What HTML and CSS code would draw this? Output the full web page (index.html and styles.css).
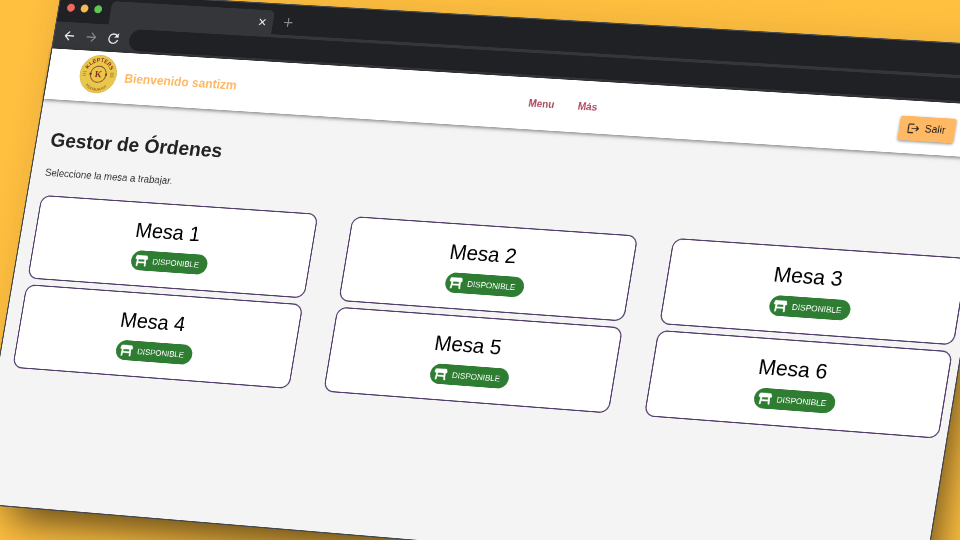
FILE: index.html
```html
<!DOCTYPE html>
<html lang="es">
<head>
    <meta charset="utf-8">
    <title>Gestor de Órdenes</title>
    <link rel="stylesheet" href="styles.css">
</head>
<body>
    <svg class="sprite" aria-hidden="true">
        <symbol id="icon-table" viewBox="0 0 24 24">
            <path fill="currentColor" stroke="currentColor" stroke-width=".8" d="m21.96 8.730-1-4c-.12-.43-.51-.73-.96-.73H4c-.45 0-.84.3-.96.73l-1 4c-.18.63.3 1.270.96 1.270h1.800L4 21h2l.5-5h11l.5 5h2l-.8-11H21c.66 0 1.140-.64.96-1.270zM6.700 14l.3-4h10l.3 4H6.700z"/>
        </symbol>
    </svg>

    <div class="stage">
        <div class="window">
            <!-- Browser bars -->
            <div class="tab-bar">
                <span class="dot red"></span>
                <span class="dot yellow"></span>
                <span class="dot green"></span>
                <div class="tab">
                    <button class="bar-button" aria-label="Cerrar">
                        <svg width="11" height="11" viewBox="0 0 12 12"><path d="M1 1l10 10M11 1L1 11" stroke="currentColor" stroke-width="2"/></svg>
                    </button>
                </div>
                <button class="bar-button muted" aria-label="Nueva">
                    <svg width="14" height="14" viewBox="0 0 14 14"><path d="M7 0v14M0 7h14" stroke="currentColor" stroke-width="2"/></svg>
                </button>
            </div>
            <div class="toolbar">
                <button class="bar-button" aria-label="Atrás">
                    <svg width="20" height="20" viewBox="0 0 20 20"><path d="M18 10H3M10 3l-7 7 7 7" fill="none" stroke="currentColor" stroke-width="2"/></svg>
                </button>
                <button class="bar-button muted" aria-label="Adelante">
                    <svg width="20" height="20" viewBox="0 0 20 20"><path d="M2 10h15M10 3l7 7-7 7" fill="none" stroke="currentColor" stroke-width="2"/></svg>
                </button>
                <button class="bar-button" aria-label="Recargar">
                    <svg width="20" height="20" viewBox="0 0 20 20"><path d="M16 5.500A7.500 7.500 0 1 0 17.500 12" fill="none" stroke="currentColor" stroke-width="2"/><path d="M18.500 1v7.500H11z" fill="currentColor"/></svg>
                </button>
                <input class="address" type="text" aria-label="Dirección">
            </div>

            <header class="header">
                <div class="brand">
                    <svg class="logo" viewBox="0 0 62 62" role="img" aria-label="Logo">
                        <defs>
                            <path id="arc-top" d="M11 31a20 20 0 0 1 40 0"/>
                            <path id="arc-bottom" d="M6 33a25 25 0 0 0 50 0"/>
                        </defs>
                        <circle cx="31" cy="31" r="30.500" fill="#e8c84a" stroke="#d3b257"/>
                        <circle cx="31" cy="31" r="13" fill="none" stroke="#9a4a2c" stroke-width="1.500"/>
                        <circle cx="18" cy="31" r="2" fill="#8c2f22"/>
                        <circle cx="44" cy="31" r="2" fill="#8c2f22"/>
                        <path d="M5 28h6M5 31h6M5 34h6M51 28h6M51 31h6M51 34h6" stroke="#b98a3c" stroke-width="1.500"/>
                        <text class="logo-letter" x="31" y="36" text-anchor="middle">K</text>
                        <text class="logo-name"><textPath href="#arc-top" startOffset="50%" text-anchor="middle">KLEPTERS</textPath></text>
                        <text class="logo-sub"><textPath href="#arc-bottom" startOffset="50%" text-anchor="middle">RESTAURANT</textPath></text>
                    </svg>
                    <span class="welcome">Bienvenido santizm</span>
                </div>
                <nav class="nav">
                    <a href="#">Menu</a>
                    <a href="#">Más</a>
                </nav>
                <button class="logout">
                    <svg width="20" height="20" viewBox="0 0 24 24"><path fill="currentColor" d="m18 7-1.400 1.400L19.200 11H9v2h10.200l-2.600 2.600L18 17l5-5-5-5zM4 5h9V3H4c-1.100 0-2 .9-2 2v14c0 1.100.9 2 2 2h9v-2H4V5z"/></svg>
                    Salir
                </button>
            </header>

            <main class="content">
                <h1>Gestor de Órdenes</h1>
                <p class="subtitle">Seleccione la mesa a trabajar.</p>

                <div class="tables">
                    <div class="card">
                        <h2>Mesa 1</h2>
                        <span class="chip"><svg><use href="#icon-table"/></svg>DISPONIBLE</span>
                    </div>
                    <div class="card">
                        <h2>Mesa 2</h2>
                        <span class="chip"><svg><use href="#icon-table"/></svg>DISPONIBLE</span>
                    </div>
                    <div class="card">
                        <h2>Mesa 3</h2>
                        <span class="chip"><svg><use href="#icon-table"/></svg>DISPONIBLE</span>
                    </div>
                    <div class="card">
                        <h2>Mesa 4</h2>
                        <span class="chip"><svg><use href="#icon-table"/></svg>DISPONIBLE</span>
                    </div>
                    <div class="card">
                        <h2>Mesa 5</h2>
                        <span class="chip"><svg><use href="#icon-table"/></svg>DISPONIBLE</span>
                    </div>
                    <div class="card">
                        <h2>Mesa 6</h2>
                        <span class="chip"><svg><use href="#icon-table"/></svg>DISPONIBLE</span>
                    </div>
                </div>
            </main>
        </div>
    </div>
</body>
</html>
```
FILE: styles.css
```css
* {
    box-sizing: border-box;
}

body {
    margin: 0;
    background-color: #ffbf3f;
    font-family: "Liberation Sans", Arial, sans-serif;
}

button {
    font-family: inherit;
    border: none;
    cursor: pointer;
}

.sprite {
    display: none;
}

.stage {
    height: 100vh;
    overflow: hidden;
}

/* the whole browser window is tilted in perspective */
.window {
    display: flex;
    flex-direction: column;
    width: 160vw;
    min-height: 831px;
    background-color: #f4f4f4;
    box-shadow: 0 0 0 2px #46484a, 36px 50px 60px -28px rgba(0, 0, 0, 0.6), 0 0 50px rgba(0, 0, 0, 0.1);
    transform-origin: 0 0;
    transform: matrix3d(0.5881, 0.0344, 0, -0.0000291, -0.1039, 0.6131, 0, -0.0000035, 0, 0, 1, 0, 62, -8, 0, 1);
}

/* Browser bars */
.tab-bar {
    display: flex;
    align-items: center;
    gap: 10px;
    height: 48px;
    padding-left: 13px;
    background-color: #202124;
}

.dot {
    width: 13px;
    height: 13px;
    border-radius: 50%;
}

.red {
    background-color: #ee6a5f;
}

.yellow {
    background-color: #f5bd4f;
}

.green {
    background-color: #61c454;
}

.tab {
    display: flex;
    align-items: center;
    justify-content: flex-end;
    align-self: flex-end;
    width: 272px;
    height: 38px;
    margin-left: 5px;
    padding-right: 12px;
    border-radius: 8px 8px 0 0;
    background-color: #35363a;
}

.bar-button {
    display: flex;
    padding: 0;
    background: none;
    color: #e8eaed;
}

.tab-bar > .bar-button {
    margin: 8px 0 0 8px;
}

.muted {
    color: #86888c;
}

.toolbar {
    display: flex;
    align-items: center;
    gap: 17px;
    height: 44px;
    padding: 0 15px;
    background-color: #35363a;
}

.address {
    flex: 1;
    height: 35px;
    padding: 0 18px;
    border: none;
    border-radius: 18px;
    background-color: #202124;
    color: #e8eaed;
    font-size: 16px;
}

/* App header */
.header {
    display: flex;
    align-items: center;
    justify-content: space-between;
    height: 82px;
    padding: 0 64px 0 53px;
    background-color: #fff;
    box-shadow: 0 2px 6px rgba(0, 0, 0, 0.5);
}

.brand {
    display: flex;
    align-items: center;
    gap: 14px;
}

.logo {
    width: 62px;
    height: 62px;
    margin-bottom: 8px;
}

.logo-letter {
    font: bold 15px "Liberation Serif", serif;
    fill: #8c2f22;
}

.logo-name {
    font: bold 9px "Liberation Sans", sans-serif;
    fill: #8c2f22;
}

.logo-sub {
    font: bold 6px "Liberation Sans", sans-serif;
    fill: #a8682f;
}

.welcome {
    color: #ffb864;
    font-size: 20px;
    font-weight: bold;
}

.nav {
    display: flex;
    gap: 38px;
}

.nav a {
    color: #aa4a5c;
    font-size: 16px;
    font-weight: bold;
    text-decoration: none;
}

.logout {
    display: flex;
    align-items: center;
    gap: 8px;
    height: 38px;
    margin-top: 3px;
    padding: 0 15px 0 12px;
    border-radius: 4px;
    background-color: #ffb964;
    box-shadow: 0 2px 4px rgba(0, 0, 0, 0.4);
    color: #2b2018;
    font-size: 16px;
}

/* Tables */
.content {
    flex: 1;
    padding: 47px 12px 24px 23px;
}

h1 {
    margin: 0 0 26px;
    color: #222;
    font-size: 32px;
    line-height: 37px;
}

.subtitle {
    margin: 0 0 27px;
    color: #333;
    font-size: 16px;
    line-height: 18px;
}

.tables {
    display: grid;
    grid-template-columns: repeat(3, 1fr);
    gap: 9px 56px;
}

.card {
    display: flex;
    flex-direction: column;
    align-items: center;
    gap: 11px;
    padding: 23px 0 24px;
    border: 2px solid #56406e;
    border-radius: 16px;
    background-color: #fff;
}

.card h2 {
    margin: 0;
    padding-right: 21px;
    font-size: 33px;
    font-weight: normal;
    line-height: 42px;
}

.chip {
    display: flex;
    align-items: center;
    gap: 6px;
    height: 32px;
    padding: 0 13px 0 5px;
    border-radius: 16px;
    background-color: #2e7d32;
    color: #fff;
    font-size: 13px;
}

.chip svg {
    width: 24px;
    height: 24px;
}
```
